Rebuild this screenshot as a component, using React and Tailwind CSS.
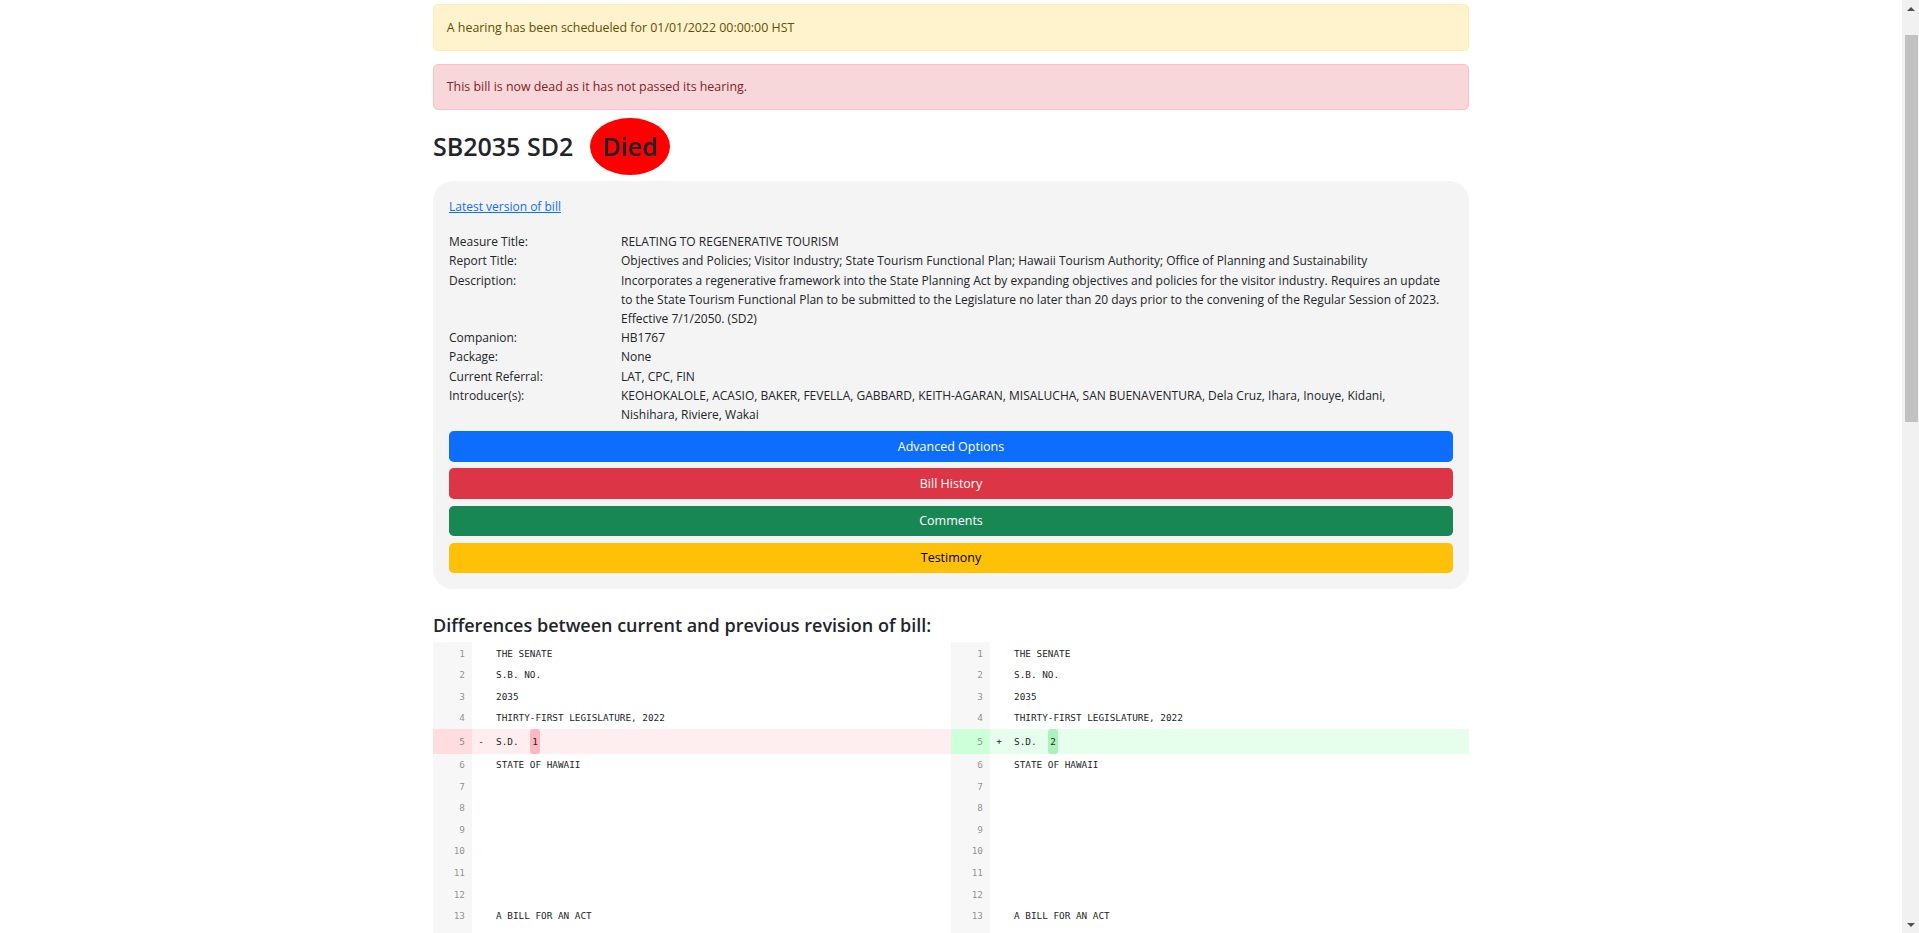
import React from "react";

const info = [
    ["Measure Title:", "RELATING TO REGENERATIVE TOURISM"],
    ["Report Title:", "Objectives and Policies; Visitor Industry; State Tourism Functional Plan; Hawaii Tourism Authority; Office of Planning and Sustainability"],
    ["Description:", "Incorporates a regenerative framework into the State Planning Act by expanding objectives and policies for the visitor industry. Requires an update to the State Tourism Functional Plan to be submitted to the Legislature no later than 20 days prior to the convening of the Regular Session of 2023. Effective 7/1/2050. (SD2)"],
    ["Companion:", "HB1767"],
    ["Package:", "None"],
    ["Current Referral:", "LAT, CPC, FIN"],
    ["Introducer(s):", "KEOHOKALOLE, ACASIO, BAKER, FEVELLA, GABBARD, KEITH-AGARAN, MISALUCHA, SAN BUENAVENTURA, Dela Cruz, Ihara, Inouye, Kidani, Nishihara, Riviere, Wakai"],
];

const buttons = [
    { label: "Advanced Options", cls: "bg-[#0d6efd] text-white" },
    { label: "Bill History", cls: "bg-[#dc3545] text-white" },
    { label: "Comments", cls: "bg-[#198754] text-white" },
    { label: "Testimony", cls: "bg-[#ffc107] text-black" },
];

// bill text shared by both sides (line 5 is the only change)
const billLines = [
    "THE SENATE",
    "S.B. NO.",
    "2035",
    "THIRTY-FIRST LEGISLATURE, 2022",
    null,
    "STATE OF HAWAII",
    "",
    "",
    "",
    "",
    "",
    "",
    "A BILL FOR AN ACT",
    "",
    "",
    "RELATING TO REGENERATIVE TOURISM.",
    "",
    "",
    "BE IT ENACTED BY THE LEGISLATURE OF THE STATE OF HAWAII:",
    "",
    "SECTION 1. The legislature finds that tourism is a vital part of",
    "Hawaii's economy. The legislature further finds that tourism",
    "places pressure on Hawaii's natural resources, infrastructure,",
    "and communities.",
    "",
    "The legislature also finds that a regenerative approach to",
    "tourism seeks to leave places better than they were found.",
    "",
    "The purpose of this Act is to incorporate a regenerative",
    "framework into the Hawaii State Planning Act.",
    "",
    "SECTION 2. Section 226-8, Hawaii Revised Statutes, is amended",
    "to read as follows:",
    "",
    "\"§226-8 Objective and policies for the economy--visitor",
    "industry. (a) Planning for the State's economy with regard to",
    "the visitor industry shall be directed toward the achievement",
    "of the objective of a visitor industry that constitutes a major",
    "component of steady growth for Hawaii's economy.",
    "",
    "(b) To achieve the visitor industry objective, it shall be the",
    "policy of this State to:",
    "",
    "(1) Support and assist in the promotion of Hawaii's visitor",
    "attractions and facilities;",
    "",
    "(2) Ensure that visitor industry activities are in keeping with",
    "the social, economic, and physical needs and aspirations of",
    "Hawaii's people;",
    "",
    "(3) Improve the quality of existing visitor destination areas",
    "by utilizing Hawaii's strengths in science and technology;",
    "",
    "(4) Encourage cooperation and coordination between the",
    "government and private sectors in developing and maintaining",
    "well-designed, adequately serviced visitor industry and related",
    "developments;",
    "",
    "SECTION 3. Statutory material to be repealed is bracketed and",
    "stricken. New statutory material is underscored.",
    "",
    "SECTION 4. This Act shall take effect on July 1, 2050.",
];

const Half = ({ n, text, kind, sign, word }) => {
    const row = kind === "removed" ? "bg-[#ffeef0]" : kind === "added" ? "bg-[#e6ffed]" : "bg-white";
    const gutter = kind === "removed" ? "bg-[#ffdce0]" : kind === "added" ? "bg-[#cdffd8]" : "bg-[#f7f7f7]";
    const mark = kind === "removed" ? "bg-[#fdb8c0]" : "bg-[#acf2bd]";
    return (
        <div className={`flex w-1/2 items-stretch ${row}`}>
            <div className={`w-[39px] shrink-0 pr-[7px] text-right text-[#212529]/50 flex items-center justify-end ${gutter}`}>{n}</div>
            <div className="w-[18px] shrink-0 flex items-center justify-center text-[#212529]">{sign}</div>
            <div className="pl-[4px] flex items-center whitespace-pre text-[#212529]">
                {word ? (
                    <>
                        <span className="px-[2px]">S.D. </span>
                        <span className={`ml-[4px] px-[2px] py-[3px] rounded-[3px] ${mark}`}>{word}</span>
                    </>
                ) : (
                    <span className="px-[2px]">{text}</span>
                )}
            </div>
        </div>
    );
};

const Scrollbar = () => (
    <div className="fixed top-0 right-0 h-screen w-[17px] bg-[#f1f1f1] flex flex-col items-center">
        <div className="h-[17px] w-full flex items-center justify-center">
            <svg width="8" height="4" viewBox="0 0 8 4"><path d="M0 4 L4 0 L8 4 Z" fill="#505050" /></svg>
        </div>
        <div className="h-[18px]" />
        <div className="h-[387px] w-[13px] ml-[1px] bg-[#c1c1c1]" />
        <div className="flex-1" />
        <div className="h-[17px] w-full flex items-center justify-center">
            <svg width="8" height="4" viewBox="0 0 8 4"><path d="M0 0 L8 0 L4 4 Z" fill="#505050" /></svg>
        </div>
    </div>
);

export default function App() {
    return (
        <div className="min-h-screen bg-white pr-[17px] font-['Open_Sans',sans-serif] text-[12px] leading-[19.2px] text-[#212529]">
            <Scrollbar />
            <div className="w-[1036px] mx-auto pt-[4px] pb-[40px]">

                <div className="rounded-[4.8px] border border-[#ffecb5] bg-[#fff3cd] text-[#664d03] text-[12.4px] p-[12.8px] mb-[12.8px]">
                    A hearing has been schedueled for 01/01/2022 00:00:00 HST
                </div>
                <div className="rounded-[4.8px] border border-[#f5c2c7] bg-[#f8d7da] text-[#842029] text-[12.4px] p-[12.8px]">
                    This bill is now dead as it has not passed its hearing.
                </div>

                <div className="flex items-baseline gap-[17px] mt-[7.5px]">
                    <h2 className="text-[25px] font-semibold leading-[30px]">SB2035 SD2</h2>
                    <span className="bg-[#ff0000] rounded-[50%] px-[12px] py-[13.5px] text-[25px] leading-[30px] font-semibold">Died</span>
                </div>

                <div className="mt-[6px] rounded-[20px] bg-[#f4f4f4] p-[16px]">
                    <a href="#" className="text-[#0d6efd] underline">Latest version of bill</a>

                    <div className="mt-[16px] grid grid-cols-[172px_821px]">
                        {info.map(([label, value]) => (
                            <React.Fragment key={label}>
                                <div>{label}</div>
                                <div>{value}</div>
                            </React.Fragment>
                        ))}
                    </div>

                    <div className="mt-[7px] flex flex-col gap-[6.4px]">
                        {buttons.map((b) => (
                            <button key={b.label} className={`h-[30.8px] w-full rounded-[4.8px] text-[12.5px] ${b.cls}`}>
                                {b.label}
                            </button>
                        ))}
                    </div>
                </div>

                <h4 className="mt-[25px] mb-[5px] text-[18px] font-semibold leading-[23px]">
                    Differences between current and previous revision of bill:
                </h4>

                <div className="font-['DejaVu_Sans_Mono',monospace] text-[9.35px]">
                    {billLines.map((line, i) => {
                        const n = i + 1;
                        if (line === null) {
                            return (
                                <div key={n} className="flex h-[25px]">
                                    <Half n={n} kind="removed" sign="-" word="1" />
                                    <Half n={n} kind="added" sign="+" word="2" />
                                </div>
                            );
                        }
                        return (
                            <div key={n} className="flex h-[21.6px]">
                                <Half n={n} text={line} />
                                <Half n={n} text={line} />
                            </div>
                        );
                    })}
                </div>
            </div>
        </div>
    );
}
